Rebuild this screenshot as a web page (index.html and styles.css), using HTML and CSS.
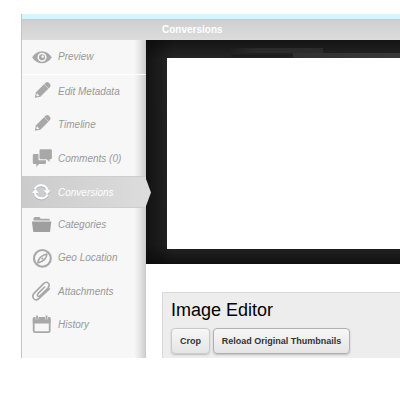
FILE: index.html
```
<!DOCTYPE html>
<html lang="en">
<head>
<meta charset="utf-8">
<title>Conversions</title>
<link rel="stylesheet" href="styles.css">
</head>
<body>
<div class="app">
  <div class="topbar"></div>
  <header class="header">Conversions</header>
  <div class="body">
    <nav class="sidebar">
      <a class="item first"><svg class="icon" viewBox="0 0 20 20"><path d="M.1 10.300C5 2.300 14.800 2.300 19.800 10.300C14.800 18.300 5 18.300 .1 10.300z" fill="#a8a8a8"/><circle cx="10" cy="10.200" r="4.500" fill="#f7f7f7"/><circle cx="10" cy="10.200" r="3" fill="#a6a6a6"/><circle cx="10.700" cy="9.600" r="1.300" fill="#f7f7f7"/></svg>Preview</a>
      <a class="item"><svg class="icon" viewBox="0 0 20 20"><path d="M2.800 16.800L4 11.300L12 3.300L16.400 7.700L8.400 15.700z" fill="#a8a8a8"/><path d="M12.200 3.100L14 1.500Q15.300 .5 16.600 1.600L18 3Q19.100 4.300 18.200 5.700L16.600 7.500z" fill="#a8a8a8"/><path d="M4.900 12.300L7.300 14.700L5 15.200L4.300 14.500z" fill="#f7f7f7"/></svg>Edit Metadata</a>
      <a class="item"><svg class="icon" viewBox="0 0 20 20"><path d="M2.800 16.800L4 11.300L12 3.300L16.400 7.700L8.400 15.700z" fill="#a8a8a8"/><path d="M12.200 3.100L14 1.500Q15.300 .5 16.600 1.600L18 3Q19.100 4.300 18.200 5.700L16.600 7.500z" fill="#a8a8a8"/><path d="M4.900 12.300L7.300 14.700L5 15.200L4.300 14.500z" fill="#f7f7f7"/></svg>Timeline</a>
      <a class="item comments"><svg class="icon" viewBox="0 0 20 20"><path d="M2 6H6.500V12.200H14V14.800Q14 16 12.800 16H7L4.300 19V16H2Q.8 16 .8 14.800V7.200Q.8 6 2 6z" fill="#a8a8a8"/><path d="M8.700 1.200H18.700Q19.900 1.200 19.900 2.400V10Q19.900 11.200 18.700 11.200H17.500V14L14.600 11.200H8.700Q7.500 11.200 7.500 10V2.400Q7.500 1.200 8.700 1.200z" fill="#a8a8a8"/></svg>Comments (0)</a>
      <a class="item active"><svg class="icon shadowed" viewBox="0 0 20 20"><g fill="none" stroke="#fff" stroke-width="2.100"><path d="M2.900 7A6.800 6.800 0 0 1 15.600 8.500"/><path d="M15.500 12.600A6.800 6.800 0 0 1 2.800 11.100"/></g><path d="M11.500 8.300H18.700L15.100 12.500zM-.3 11.300L3.300 7.100L6.900 11.300z" fill="#fff"/></svg>Conversions</a>
      <a class="item"><svg class="icon" viewBox="0 0 20 20"><path d="M1.500 6.600V4.400L2.500 3.100H7.500L8.700 4.700H17L17.800 5.500V6.600z" fill="#a8a8a8"/><path d="M-.1 7.400H19.300L18 18H1.300z" fill="#9f9f9f"/></svg>Categories</a>
      <a class="item"><svg class="icon" viewBox="0 0 20 20"><circle cx="10.400" cy="11.400" r="8.400" fill="none" stroke="#a8a8a8" stroke-width="2.100"/><path d="M14.900 6.900Q14.400 13.700 5.900 15.900Q6.400 9.100 14.900 6.900z" fill="none" stroke="#a8a8a8" stroke-width="1.600" stroke-linejoin="round"/><circle cx="10.400" cy="11.400" r="1" fill="#a8a8a8"/></svg>Geo Location</a>
      <a class="item attachments"><svg class="icon" viewBox="0 0 20 20"><path d="M12.600 6L6.200 12.400Q4.700 14.200 5.900 15.200Q7.100 16 8.600 14.400L15.700 7.300Q18.300 4.300 16.300 2.200Q14.300 .1 11.600 2.600L2.500 11.900Q-.6 15.100 1.800 17.700Q4.300 20.200 7.400 17.100L17.400 7.800" fill="none" stroke="#a8a8a8" stroke-width="1.600" stroke-linecap="round"/></svg>Attachments</a>
      <a class="item"><svg class="icon" viewBox="0 0 20 20"><rect x="1.700" y="4" width="16" height="14.100" rx="1.200" fill="#f7f7f7" stroke="#a8a8a8" stroke-width="1.800"/><path d="M.8 9.500V4.500Q.8 3.300 2 3.300H17.400Q18.600 3.300 18.600 4.500V9.500z" fill="#a8a8a8"/><path d="M5 2V5.300M14.500 2V5.300" stroke="#f7f7f7" stroke-width="2.900"/><path d="M5 1.400V5.200M14.500 1.400V5.200" stroke="#a8a8a8" stroke-width="1.800"/></svg>History</a>
    </nav>
    <main class="content">
      <section class="stage"><div class="canvas"></div></section>
      <section class="editor">
        <h2>Image Editor</h2>
        <div class="actions"><button class="crop">Crop</button><button class="reload">Reload Original Thumbnails</button></div>
      </section>
    </main>
  </div>
</div>
</body>
</html>
```
FILE: styles.css
```
* { box-sizing: border-box; }
body {
  margin: 0;
  padding-top: 14px;
  background: #fff;
  font-family: "Liberation Sans", Arial, sans-serif;
  overflow: hidden;
}
.app {
  height: 344px;
  margin-left: 21px;
  border-left: 1px solid #c4c4c4;
  overflow: hidden;
}
.topbar {
  height: 6px;
  background: #d4f6fd;
  border-bottom: 1px solid #a4d8e2;
}
.header {
  height: 20px;
  padding-left: 140px;
  background: linear-gradient(#cfcfcf, #dcdcdc);
  color: #fff;
  font-size: 10px;
  font-weight: bold;
  line-height: 20px;
}
.body {
  display: flex;
  height: 318px;
}
.sidebar {
  flex: none;
  width: 124px;
  background: linear-gradient(90deg, #f7f7f7 112px, #ececec 116px, #d0d0d0 123px, #c6c6c6 124px);
}
.item {
  display: flex;
  align-items: center;
  gap: 6px;
  height: 33px;
  padding-left: 10px;
  color: #999;
  font-size: 10px;
  font-style: italic;
  line-height: 12px;
}
.icon {
  flex: none;
  width: 20px;
  height: 20px;
  margin-bottom: 1px;
  overflow: visible;
}
.first {
  height: 35px;
  border-bottom: 1px solid #fff;
}
.first .icon { margin-bottom: 0; }
.comments { height: 35px; }
.attachments {
  height: 34px;
  padding-top: 2px;
}
.attachments .icon,
.active .icon { margin-bottom: 2px; }
.active {
  position: relative;
  height: 32px;
  padding-top: 2px;
  border-top: 1px solid #cdcdcd;
  border-bottom: 1px solid #cdcdcd;
  background: linear-gradient(90deg, #cbcbcb, #dcdcdc);
  color: #fff;
}
.active::after {
  content: "";
  position: absolute;
  z-index: 1;
  left: 124px;
  top: 2px;
  width: 5px;
  height: 27px;
  background: #dcdcdc;
  clip-path: polygon(0 0, 100% 50%, 0 100%);
}
.shadowed { filter: drop-shadow(0 1px 0 #aab4b8); }
.content {
  flex: 1;
  min-width: 0;
}
.stage {
  height: 224px;
  padding: 18px 0 15px 21px;
  background:
    linear-gradient(90deg, transparent, #2b2b2b 25px) 84px 8px / 93px 5px no-repeat,
    linear-gradient(90deg, #303030, #393939) 147px 13px / 107px 5px no-repeat,
    linear-gradient(#1a1a1a, #242424) 85px 15px / 62px 3px no-repeat,
    linear-gradient(90deg, rgba(8, 8, 8, .65), transparent 28px),
    linear-gradient(#141414, #272727 20px, #252525 205px, #101010);
}
.canvas {
  height: 191px;
  background: #fff;
}
.editor {
  height: 80px;
  margin: 28px 0 0 16px;
  padding: 7px 8px;
  border: 1px solid #d8d8d8;
  border-right: 0;
  background: #ededed;
}
h2 {
  margin: 0 0 8px;
  color: #000;
  font-size: 18px;
  font-weight: normal;
  line-height: 20px;
}
.actions {
  display: flex;
  gap: 3px;
}
button {
  height: 26px;
  padding: 0;
  border: 1px solid #c9c9c9;
  border-radius: 4px;
  background: linear-gradient(#f7f7f7, #e5e5e5);
  box-shadow: 0 1px 2px rgba(0, 0, 0, .2);
  color: #333;
  font: bold 9px "Liberation Sans", Arial, sans-serif;
}
.crop { width: 39px; }
.reload {
  width: 137px;
  border-color: #b0b0b0;
}
```
